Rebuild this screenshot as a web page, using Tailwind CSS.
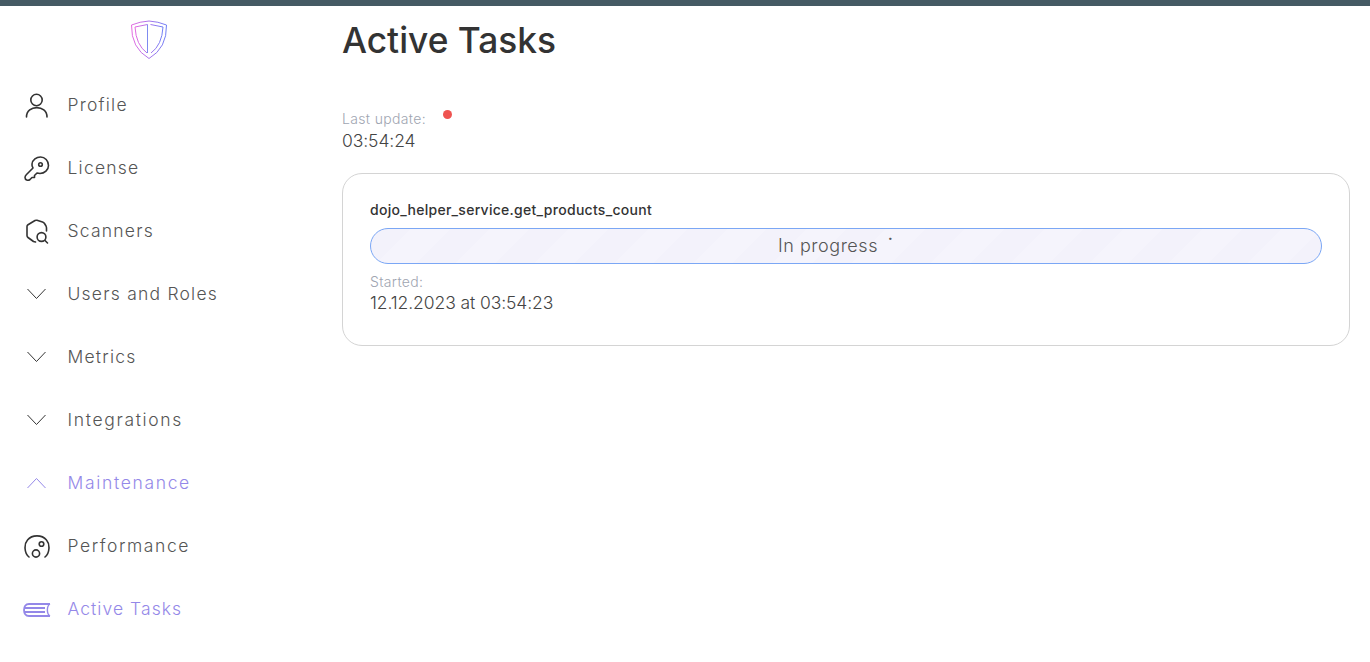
<!DOCTYPE html>
<html lang="en">
<head>
  <meta charset="UTF-8">
  <meta name="viewport" content="width=device-width, initial-scale=1.0">
  <title>Active Tasks</title>
  <script src="https://cdn.jsdelivr.net/npm/@tailwindcss/browser@4"></script>
</head>
<body class="bg-white h-[662px] overflow-hidden font-['Inter',sans-serif] text-[#333]">
  <div class="h-[6px] bg-[#455a64]"></div>

  <div class="flex">
    <!-- Sidebar -->
    <aside class="w-[342px] shrink-0">
      <div class="h-[68px] pl-[130px] pt-[14px]">
        <svg width="38" height="40" viewBox="0 0 38 40" fill="none">
          <defs>
            <linearGradient id="shield" x1="0" y1="0" x2="1" y2="0">
              <stop offset="0" stop-color="#e46ae0"/>
              <stop offset="1" stop-color="#6f7ff5"/>
            </linearGradient>
          </defs>
          <path d="M1.5 5 Q10 1.5 19 1 Q28 1.5 36.5 5 Q37 28 19 38.5 Q1 28 1.5 5 Z" stroke="url(#shield)" stroke-width="1"/>
          <path d="M17.5 4.5 L5 7 Q6 25 17 33 M20.5 4.5 L33 7 Q32 25 21 33" stroke="url(#shield)" stroke-width="1"/>
          <path d="M17.5 4.5 V33" stroke="#7f8bf0" stroke-width="1"/>
        </svg>
      </div>

      <nav class="text-[17.5px] tracking-[0.07em] text-[#555] font-light">
        <a class="flex items-center h-[63px]">
          <span class="w-[67.5px] pl-[24px]">
            <svg width="24" height="26" viewBox="0 0 24 26" fill="none" stroke="#333" stroke-width="1.6"><circle cx="12.5" cy="7" r="5.7"/><path d="M2.5 24 C2.5 11.5 23 11.5 23 24" stroke-linecap="round"/></svg>
          </span>
          <span>Profile</span>
        </a>
        <a class="flex items-center h-[63px]">
          <span class="w-[67.5px] pl-[24px]">
            <svg width="26" height="26" viewBox="0 0 26 26" fill="none" stroke="#333" stroke-width="1.6" stroke-linejoin="round"><path d="M8 8 C8.5 3.5 12.5 1 16.5 1 C21 1 24.5 5 24.5 9.5 C24.5 14 20.5 17.5 16 17.5 L13 17 L10.5 19.5 L10.5 21.5 L8 21.5 L6 23.5 C4 25 1 24 1 21.5 C1 20.5 1.5 19.5 2.5 18.5 L9 12 C8.2 10.8 7.8 9.5 8 8 Z"/><circle cx="16.5" cy="8.5" r="1.8"/></svg>
          </span>
          <span>License</span>
        </a>
        <a class="flex items-center h-[63px]">
          <span class="w-[67.5px] pl-[26px]">
            <svg width="23" height="26" viewBox="0 0 23 26" fill="none" stroke="#333" stroke-width="1.6" stroke-linecap="round" stroke-linejoin="round"><path d="M9.5 23 L7.5 22.5 L2 18.5 Q1 17.8 1 16.5 L1 7.5 Q1 6.3 2 5.7 L9 1.5 Q10 1 11 1.3 L16.5 3 Q17.8 3.4 18.5 4.5 L20 7 Q20.5 8 20.5 9 L20.5 12"/><circle cx="15.5" cy="18" r="4.4"/><path d="M19 21.5 L21.5 24"/></svg>
          </span>
          <span>Scanners</span>
        </a>
        <a class="flex items-center h-[63px]">
          <span class="w-[67.5px] pl-[27px] -mt-[2px]">
            <svg class="block" width="19" height="12" viewBox="0 0 19 12" fill="none" stroke="#333" stroke-width="1"><path d="M0.5 1 L9.5 10.5 L18.5 1"/></svg>
          </span>
          <span>Users and Roles</span>
        </a>
        <a class="flex items-center h-[63px]">
          <span class="w-[67.5px] pl-[27px] -mt-[2px]">
            <svg class="block" width="19" height="12" viewBox="0 0 19 12" fill="none" stroke="#333" stroke-width="1"><path d="M0.5 1 L9.5 10.5 L18.5 1"/></svg>
          </span>
          <span>Metrics</span>
        </a>
        <a class="flex items-center h-[63px]">
          <span class="w-[67.5px] pl-[27px] -mt-[2px]">
            <svg class="block" width="19" height="12" viewBox="0 0 19 12" fill="none" stroke="#333" stroke-width="1"><path d="M0.5 1 L9.5 10.5 L18.5 1"/></svg>
          </span>
          <span class="tracking-[0.095em]">Integrations</span>
        </a>
        <a class="flex items-center h-[63px] text-[#9488e8]">
          <span class="w-[67.5px] pl-[27px] -mt-[2px]">
            <svg class="block" width="19" height="12" viewBox="0 0 19 12" fill="none" stroke="#9488e8" stroke-width="1"><path d="M0.5 11 L9.5 1.5 L18.5 11"/></svg>
          </span>
          <span class="tracking-[0.095em]">Maintenance</span>
        </a>
        <a class="flex items-center h-[63px]">
          <span class="w-[67.5px] pl-[24px]">
            <svg class="block" width="26" height="26" viewBox="0 0 26 26" fill="none" stroke="#333" stroke-width="1.6" stroke-linecap="round"><path d="M5 23 C0 19 0 10 3.5 6 C8 0.5 18 0.5 22.5 6 C26 10 26 19 21 23"/><circle cx="12" cy="19.5" r="3.6"/><circle cx="17.5" cy="10" r="2.3"/></svg>
          </span>
          <span class="tracking-[0.09em]">Performance</span>
        </a>
        <a class="flex items-center h-[63px] text-[#9488e8]">
          <span class="w-[67.5px] pl-[23px]">
            <svg class="block" width="28" height="14" viewBox="0 0 28 14" fill="none" stroke="#9488e8" stroke-width="1.8"><path d="M27 1 H6 C2.5 1 1 4 1 7 C1 10 2.5 13 6 13 H27"/><path d="M2 5 H22 M2 9 H22" stroke-width="2.2"/><path d="M27 1 C23.5 3 23.5 11 27 13" stroke-width="1.4"/></svg>
          </span>
          <span class="tracking-[0.06em]">Active Tasks</span>
        </a>
      </nav>
    </aside>

    <!-- Main -->
    <main class="flex-1 pr-5">
      <h1 class="text-[35.3px] leading-[40px] font-medium text-[#333] mt-[15px]">Active Tasks</h1>

      <div class="mt-[49px]">
        <div class="flex items-start">
          <span class="text-[14px] leading-[18px] tracking-[0.025em] text-[#a0a5b1] font-light">Last update:</span>
          <span class="w-[9px] h-[9px] rounded-full bg-[#ef5350] ml-[17px]"></span>
        </div>
        <div class="text-[17.5px] leading-[25px] tracking-[-0.005em] font-light text-[#444]">03:54:24</div>
      </div>

      <div class="mt-[20px] h-[173px] border border-[#d4d4d4] rounded-[20px] px-[27px] pt-[27px]">
        <div class="text-[14px] leading-[18px] tracking-[0.02em] font-medium text-[#333]">dojo_helper_service.get_products_count</div>
        <div class="mt-[9px] h-[36px] rounded-full border border-[#7ba7f5] flex items-center justify-center text-[18px] tracking-[0.03em] font-light text-[#555] bg-[#f3f2fb] bg-[repeating-linear-gradient(135deg,#f3f2fb_0,#f3f2fb_28px,#f5f4fc_28px,#f5f4fc_56px)]">
          <span class="-mt-[2px]">In progress</span><span class="w-[36px] pl-[10px] leading-none -mt-[2px] font-medium">˙</span>
        </div>
        <div class="mt-[9px] text-[14px] leading-[18px] tracking-[0.025em] text-[#a0a5b1] font-light">Started:</div>
        <div class="text-[17.5px] leading-[24px] tracking-[-0.005em] font-light text-[#444]">12.12.2023 at 03:54:23</div>
      </div>
    </main>
  </div>
</body>
</html>
